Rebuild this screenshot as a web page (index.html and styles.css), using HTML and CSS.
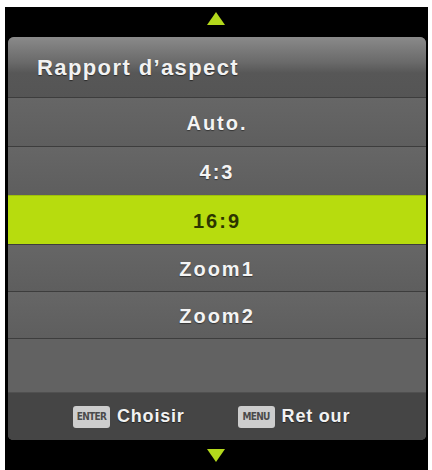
FILE: index.html
```html
<!DOCTYPE html>
<html lang="fr">
<head>
    <meta charset="UTF-8">
    <meta name="viewport" content="width=device-width, initial-scale=1.0">
    <title>Rapport d'aspect</title>
    <link rel="stylesheet" href="styles.css">
</head>
<body>
    <div class="frame">
        <div class="arrow-area">
            <svg width="18" height="13" viewBox="0 0 18 13"><polygon points="9,0 18,13 0,13" fill="#b3d81c"/></svg>
        </div>
        <div class="panel">
            <div class="title">Rapport d’aspect</div>
            <ul class="options">
                <li class="option">Auto.</li>
                <li class="option">4:3</li>
                <li class="option selected">16:9</li>
                <li class="option short">Zoom1</li>
                <li class="option short">Zoom2</li>
                <li class="option empty"></li>
            </ul>
            <div class="footer">
                <span class="key">ENTER</span>
                <span class="hint">Choisir</span>
                <span class="key menu">MENU</span>
                <span class="hint">Ret our</span>
            </div>
        </div>
        <div class="arrow-area bottom">
            <svg width="18" height="13" viewBox="0 0 18 13"><polygon points="0,0 18,0 9,13" fill="#b3d81c"/></svg>
        </div>
    </div>
</body>
</html>
```

FILE: styles.css
```css
body {
    margin: 0;
    background: #fff;
    font-family: 'Liberation Sans', Arial, sans-serif;
}
.frame {
    margin: 7px 0 0 5px;
    width: 423px;
    height: 463px;
    background: #000;
    display: flex;
    flex-direction: column;
}
.arrow-area {
    height: 30px;
    display: flex;
    justify-content: center;
    align-items: center;
    padding-right: 2px;
}
.arrow-area svg {
    display: block;
    margin-top: -6px;
}
.arrow-area.bottom svg {
    margin-top: 0;
}
.panel {
    margin: 0 2px 0 3px;
    background: #5e5e5e;
    border-radius: 6px 6px 5px 5px;
    overflow: hidden;
}
.title {
    height: 60px;
    box-sizing: border-box;
    padding: 18px 0 0 29px;
    font-size: 22px;
    font-weight: bold;
    letter-spacing: 1.4px;
    color: #f2f2f2;
    text-shadow: 0 1px 1px rgba(0, 0, 0, 0.5);
    background: linear-gradient(180deg, #8a8a8a 0%, #737373 30%, #6a6a6a 42%, #575757 60%, #555 100%);
}
.options {
    list-style: none;
    margin: 0;
    padding: 0;
}
.option {
    border-top: 1px solid #3d3d3d;
    display: flex;
    justify-content: center;
    align-items: center;
    padding-top: 3px;
    height: 45px;
    font-size: 20px;
    font-weight: bold;
    letter-spacing: 2px;
    color: #f4f4f4;
    text-shadow: 0 1px 1px rgba(0, 0, 0, 0.45);
    background: linear-gradient(180deg, #666 0%, #5e5e5e 100%);
}
.option.short {
    height: 43px;
}
.option.selected {
    background: #b7dc0e;
    color: #2c3500;
    text-shadow: none;
    border-top-color: #9fc00a;
}
.option.empty {
    height: 50px;
    background: #626262;
}
.footer {
    height: 48px;
    background: #454545;
    border-top: 1px solid #505050;
    display: flex;
    align-items: center;
    padding-left: 65px;
}
.key {
    width: 37px;
    height: 22px;
    background: #cdcdcd;
    border-radius: 3px;
    display: flex;
    justify-content: center;
    align-items: center;
    font-family: 'DejaVu Sans', sans-serif;
    font-stretch: condensed;
    font-weight: bold;
    font-size: 10px;
    letter-spacing: -0.7px;
    color: #4a4a4a;
    margin-right: 7px;
}
.key.menu {
    margin-left: 53px;
}
.hint {
    font-size: 18px;
    font-weight: bold;
    letter-spacing: 0.8px;
    color: #f2f2f2;
    text-shadow: 0 1px 1px rgba(0, 0, 0, 0.5);
}
```
